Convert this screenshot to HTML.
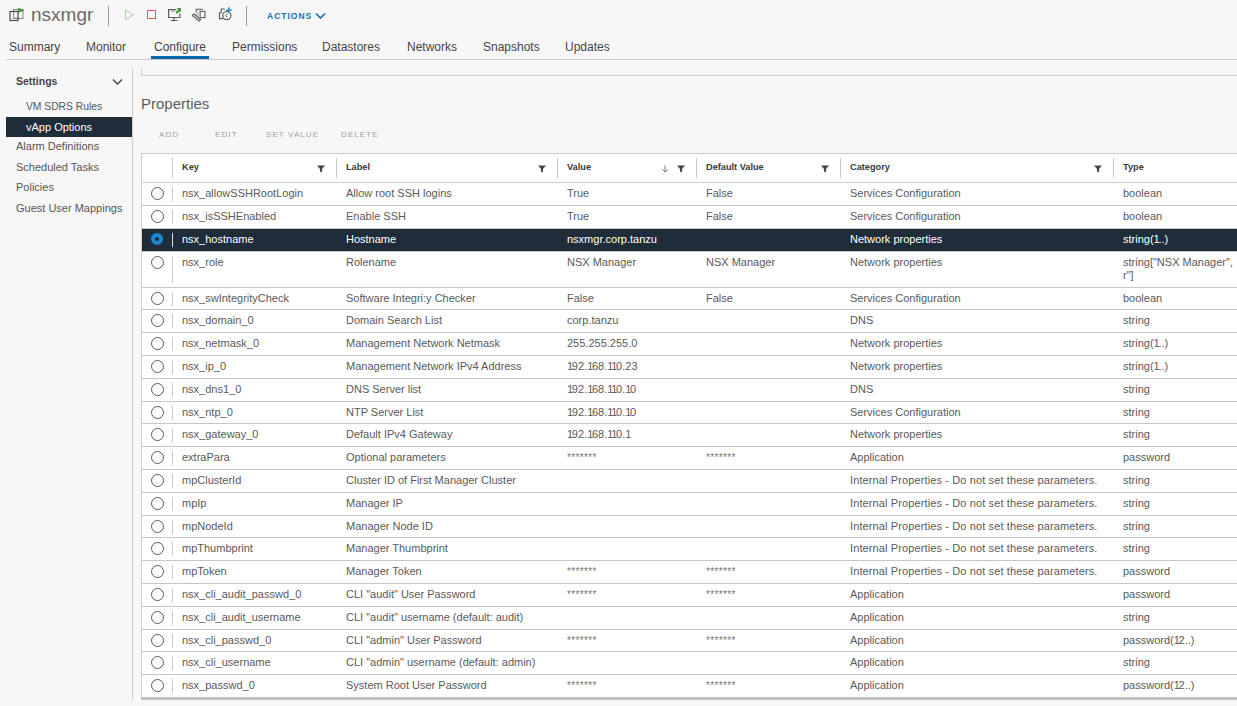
<!DOCTYPE html><html><head><meta charset="utf-8"><style>
*{margin:0;padding:0;box-sizing:border-box}
html,body{width:1237px;height:706px;overflow:hidden;background:#f7f7f7;font-family:"Liberation Sans",sans-serif;color:#565656}
.a{position:absolute;white-space:nowrap}
.t{font-size:11px;line-height:12.5px}
.hd{font-size:9.2px;font-weight:bold;color:#3a3a3a}
.tab{font-size:12px;color:#454545}
.side{font-size:10.5px;color:#565656}
.btn{font-size:8px;letter-spacing:1.1px;color:#a0a0a0}
.rad{position:absolute;width:13px;height:13px;border:1.3px solid #5a5a5a;border-radius:50%;background:#fff}
.sep{position:absolute;width:1px;background:#c8c8c8}
.hl{position:absolute;height:1px;background:#c6c6c6}
.pw{font-size:9px;letter-spacing:-0.6px}
</style></head><body>

<svg class="a" style="left:9px;top:7px" width="17" height="15" viewBox="0 0 17 15"><rect x="4.5" y="2.5" width="9.5" height="9" fill="none" stroke="#8a8a8a" stroke-width="1.1"/><rect x="1" y="4.5" width="8" height="9" fill="none" stroke="#4a4a4a" stroke-width="1.2"/><path d="M4.5 7V11H8" fill="none" stroke="#999" stroke-width="0.9"/><path d="M9 0.7L15.5 3.3L9 6Z" fill="#3c9a35"/></svg>
<div class="a" style="left:31px;top:4px;font-size:19px;color:#6a6a6a">nsxmgr</div>
<div class="a" style="left:108px;top:6px;width:1px;height:20px;background:#9a9a9a"></div>
<svg class="a" style="left:124px;top:8.5px" width="11" height="12"><path d="M1.4 1L9.5 5.8L1.4 10.6Z" fill="none" stroke="#a7d29b" stroke-width="1"/></svg>
<div class="a" style="left:146.6px;top:10px;width:9.6px;height:9px;border:1.2px solid #ec5a48"></div>
<svg class="a" style="left:167px;top:7px" width="16" height="16" viewBox="0 0 16 16"><path d="M9.5 2.6H1.6V10.5H12.9V6.5" fill="none" stroke="#5a5a5a" stroke-width="1.2"/><path d="M3.8 4.3H8" stroke="#9a9a9a" stroke-width="0.9"/><path d="M7 10.5V13M4 13.5H10.5" stroke="#5a5a5a" stroke-width="1.2"/><path d="M9.8 1H14V5.2Z" fill="#3a9a2c"/><path d="M9.3 6.3L12.5 2.8" stroke="#3a9a2c" stroke-width="2.2"/></svg>
<svg class="a" style="left:191px;top:7px" width="16" height="16" viewBox="0 0 16 16"><path d="M5.3 5.3V2.3H11.8" fill="none" stroke="#5a5a5a" stroke-width="1.1"/><rect x="9.1" y="4.3" width="4.8" height="6.3" fill="#f7f7f7" stroke="#5a5a5a" stroke-width="1.1"/><path d="M3.5 6.8L8 5.2L9.3 9.5L6.5 11Z" fill="#c8c8c8"/><path d="M1.3 8.4L2.9 6.9L9.6 12.6L8.1 14.1Z" fill="#e6e6e6" stroke="#555" stroke-width="1.1"/></svg>
<svg class="a" style="left:217px;top:6px" width="16" height="16" viewBox="0 0 16 16"><path d="M7.7 3H4.2V6.8H2.5V12.6H6" fill="none" stroke="#5a5a5a" stroke-width="1.1"/><circle cx="9.8" cy="9.6" r="4.1" fill="#f7f7f7" stroke="#5a5a5a" stroke-width="1.15"/><path d="M10.6 7.6L8.6 9.6L10.6 11.6" fill="none" stroke="#5a5a5a" stroke-width="1"/><path d="M11.9 1.3V7.1M9.1 4.2H14.7" stroke="#1b8bd6" stroke-width="1.5"/></svg>
<div class="a" style="left:246px;top:6px;width:1px;height:20px;background:#9a9a9a"></div>
<div class="a" style="left:267px;top:11px;font-size:8.5px;font-weight:bold;letter-spacing:1px;color:#1a73b8">ACTIONS</div>
<svg class="a" style="left:315px;top:12px" width="11" height="8"><path d="M1 1.5L5.5 6L10 1.5" fill="none" stroke="#1a73b8" stroke-width="1.7"/></svg>
<div class="a tab" style="left:9px;top:40px">Summary</div>
<div class="a tab" style="left:86px;top:40px">Monitor</div>
<div class="a tab" style="left:154px;top:40px">Configure</div>
<div class="a tab" style="left:232px;top:40px">Permissions</div>
<div class="a tab" style="left:322px;top:40px">Datastores</div>
<div class="a tab" style="left:407px;top:40px">Networks</div>
<div class="a tab" style="left:483px;top:40px">Snapshots</div>
<div class="a tab" style="left:565px;top:40px">Updates</div>
<div class="a" style="left:6px;top:59px;width:1231px;height:1px;background:#cccccc"></div>
<div class="a" style="left:151px;top:56px;width:58px;height:3px;background:#0065ab"></div>
<div class="a" style="left:132px;top:68px;width:1px;height:632px;background:#cccccc"></div>
<div class="a side" style="left:16px;top:75px;font-weight:bold;color:#444">Settings</div>
<svg class="a" style="left:112px;top:78px" width="11" height="8"><path d="M1 1.5L5.5 6L10 1.5" fill="none" stroke="#454545" stroke-width="1.3"/></svg>
<div class="a" style="left:6px;top:117px;width:126px;height:20px;background:#1f2d3a"></div>
<div class="a side" style="left:26px;top:100.5px;color:#565656;font-size:10.3px">VM SDRS Rules</div>
<div class="a side" style="left:26px;top:120.5px;color:#ffffff;font-size:11px">vApp Options</div>
<div class="a side" style="left:16px;top:140.0px;color:#565656;font-size:11px">Alarm Definitions</div>
<div class="a side" style="left:16px;top:160.5px;color:#565656;font-size:11px">Scheduled Tasks</div>
<div class="a side" style="left:16px;top:181.0px;color:#565656;font-size:11px">Policies</div>
<div class="a side" style="left:16px;top:202.0px;color:#565656;font-size:11px">Guest User Mappings</div>
<div class="a" style="left:141px;top:68px;width:1200px;height:8px;border-left:1px solid #cdcdcd;border-bottom:1px solid #cdcdcd"></div>
<div class="a" style="left:141px;top:95px;font-size:15px;color:#5e5e5e">Properties</div>
<div class="a btn" style="left:159px;top:130px">ADD</div>
<div class="a btn" style="left:215px;top:130px">EDIT</div>
<div class="a btn" style="left:266px;top:130px">SET VALUE</div>
<div class="a btn" style="left:341px;top:130px">DELETE</div>
<div class="a" style="left:141px;top:153px;width:1200px;height:547px;background:#fff;border:1px solid #cccccc;border-bottom:3px solid #c0c0c0"></div>
<div class="a hd" style="left:182px;top:162px">Key</div>
<div class="a hd" style="left:346px;top:162px">Label</div>
<div class="a hd" style="left:567px;top:162px">Value</div>
<div class="a hd" style="left:706px;top:162px">Default Value</div>
<div class="a hd" style="left:850px;top:162px">Category</div>
<div class="a hd" style="left:1123px;top:162px">Type</div>
<div class="sep" style="left:172px;top:158px;height:20px"></div>
<div class="sep" style="left:336px;top:158px;height:20px"></div>
<div class="sep" style="left:557px;top:158px;height:20px"></div>
<div class="sep" style="left:696px;top:158px;height:20px"></div>
<div class="sep" style="left:840px;top:158px;height:20px"></div>
<div class="sep" style="left:1113px;top:158px;height:20px"></div>
<div class="a" style="left:317px;top:165px;line-height:0"><svg style="display:block" width="8" height="8" viewBox="0 0 8 8"><path d="M0 0.5H8L5 4V7.5L3 6.5V4Z" fill="#454545"/></svg></div>
<div class="a" style="left:538px;top:165px;line-height:0"><svg style="display:block" width="8" height="8" viewBox="0 0 8 8"><path d="M0 0.5H8L5 4V7.5L3 6.5V4Z" fill="#454545"/></svg></div>
<div class="a" style="left:677px;top:165px;line-height:0"><svg style="display:block" width="8" height="8" viewBox="0 0 8 8"><path d="M0 0.5H8L5 4V7.5L3 6.5V4Z" fill="#454545"/></svg></div>
<div class="a" style="left:821px;top:165px;line-height:0"><svg style="display:block" width="8" height="8" viewBox="0 0 8 8"><path d="M0 0.5H8L5 4V7.5L3 6.5V4Z" fill="#454545"/></svg></div>
<div class="a" style="left:1094px;top:165px;line-height:0"><svg style="display:block" width="8" height="8" viewBox="0 0 8 8"><path d="M0 0.5H8L5 4V7.5L3 6.5V4Z" fill="#454545"/></svg></div>
<svg class="a" style="left:661px;top:164.5px" width="8" height="8"><path d="M4 0.5V7M1.3 4.3L4 7L6.7 4.3" fill="none" stroke="#6a6a6a" stroke-width="0.9"/></svg>
<div class="hl" style="left:142px;top:182px;width:1095px;background:#cccccc"></div>
<div class="rad" style="left:150.5px;top:187.3px"></div>
<div class="sep" style="left:172px;top:187.0px;height:14px;background:#c8c8c8"></div>
<div class="a t" style="left:182px;top:187.0px;color:#5a5a5a">nsx_allowSSHRootLogin</div>
<div class="a t" style="left:346px;top:187.0px;color:#5a5a5a">Allow root SSH logins</div>
<div class="a t" style="left:567px;top:187.0px;color:#5a5a5a">True</div>
<div class="a t" style="left:706px;top:187.0px;color:#5a5a5a">False</div>
<div class="a t" style="left:850px;top:187.0px;color:#5a5a5a">Services Configuration</div>
<div class="a t" style="left:1123px;top:187.0px;color:#5a5a5a">boolean</div>
<div class="hl" style="left:142px;top:205px;width:1095px"></div>
<div class="rad" style="left:150.5px;top:210.3px"></div>
<div class="sep" style="left:172px;top:210.0px;height:14px;background:#c8c8c8"></div>
<div class="a t" style="left:182px;top:210.0px;color:#5a5a5a">nsx_isSSHEnabled</div>
<div class="a t" style="left:346px;top:210.0px;color:#5a5a5a">Enable SSH</div>
<div class="a t" style="left:567px;top:210.0px;color:#5a5a5a">True</div>
<div class="a t" style="left:706px;top:210.0px;color:#5a5a5a">False</div>
<div class="a t" style="left:850px;top:210.0px;color:#5a5a5a">Services Configuration</div>
<div class="a t" style="left:1123px;top:210.0px;color:#5a5a5a">boolean</div>
<div class="hl" style="left:142px;top:228px;width:1095px"></div>
<div class="a" style="left:142px;top:229px;width:1095px;height:22px;background:#1f2d3a"></div>
<div class="rad" style="left:150.5px;top:232.9px;border:4.6px solid #1b87d4;background:#1f2d3a;width:12.6px;height:12.6px"></div>
<div class="sep" style="left:172px;top:233.0px;height:14px;background:#dddddd"></div>
<div class="a t" style="left:182px;top:233.0px;color:#ffffff">nsx_hostname</div>
<div class="a t" style="left:346px;top:233.0px;color:#ffffff">Hostname</div>
<div class="a t" style="left:567px;top:233.0px;color:#ffffff">nsxmgr.corp.tanzu</div>
<div class="a t" style="left:850px;top:233.0px;color:#ffffff">Network properties</div>
<div class="a t" style="left:1123px;top:233.0px;color:#ffffff">string(<span style="letter-spacing:-1.3px">1</span>..)</div>
<div class="hl" style="left:142px;top:251px;width:1095px"></div>
<div class="rad" style="left:150.5px;top:256.3px"></div>
<div class="sep" style="left:172px;top:256.0px;height:26.5px;background:#c8c8c8"></div>
<div class="a t" style="left:182px;top:256.0px;color:#5a5a5a">nsx_role</div>
<div class="a t" style="left:346px;top:256.0px;color:#5a5a5a">Rolename</div>
<div class="a t" style="left:567px;top:256.0px;color:#5a5a5a">NSX Manager</div>
<div class="a t" style="left:706px;top:256.0px;color:#5a5a5a">NSX Manager</div>
<div class="a t" style="left:850px;top:256.0px;color:#5a5a5a">Network properties</div>
<div class="a t" style="left:1123px;top:256.0px;color:#5a5a5a">string["NSX Manager",<br>r"]</div>
<div class="hl" style="left:142px;top:287px;width:1095px"></div>
<div class="rad" style="left:150.5px;top:292.3px"></div>
<div class="sep" style="left:172px;top:292.0px;height:14px;background:#c8c8c8"></div>
<div class="a t" style="left:182px;top:292.0px;color:#5a5a5a">nsx_swIntegrityCheck</div>
<div class="a t" style="left:346px;top:292.0px;color:#5a5a5a">Software Integri:y Checker</div>
<div class="a t" style="left:567px;top:292.0px;color:#5a5a5a">False</div>
<div class="a t" style="left:706px;top:292.0px;color:#5a5a5a">False</div>
<div class="a t" style="left:850px;top:292.0px;color:#5a5a5a">Services Configuration</div>
<div class="a t" style="left:1123px;top:292.0px;color:#5a5a5a">boolean</div>
<div class="hl" style="left:142px;top:309px;width:1095px"></div>
<div class="rad" style="left:150.5px;top:314.3px"></div>
<div class="sep" style="left:172px;top:314.0px;height:14px;background:#c8c8c8"></div>
<div class="a t" style="left:182px;top:314.0px;color:#5a5a5a">nsx_domain_0</div>
<div class="a t" style="left:346px;top:314.0px;color:#5a5a5a">Domain Search List</div>
<div class="a t" style="left:567px;top:314.0px;color:#5a5a5a">corp.tanzu</div>
<div class="a t" style="left:850px;top:314.0px;color:#5a5a5a">DNS</div>
<div class="a t" style="left:1123px;top:314.0px;color:#5a5a5a">string</div>
<div class="hl" style="left:142px;top:332px;width:1095px"></div>
<div class="rad" style="left:150.5px;top:337.3px"></div>
<div class="sep" style="left:172px;top:337.0px;height:14px;background:#c8c8c8"></div>
<div class="a t" style="left:182px;top:337.0px;color:#5a5a5a">nsx_netmask_0</div>
<div class="a t" style="left:346px;top:337.0px;color:#5a5a5a">Management Network Netmask</div>
<div class="a t" style="left:567px;top:337.0px;color:#5a5a5a">255.255.255.0</div>
<div class="a t" style="left:850px;top:337.0px;color:#5a5a5a">Network properties</div>
<div class="a t" style="left:1123px;top:337.0px;color:#5a5a5a">string(<span style="letter-spacing:-1.3px">1</span>..)</div>
<div class="hl" style="left:142px;top:355px;width:1095px"></div>
<div class="rad" style="left:150.5px;top:360.3px"></div>
<div class="sep" style="left:172px;top:360.0px;height:14px;background:#c8c8c8"></div>
<div class="a t" style="left:182px;top:360.0px;color:#5a5a5a">nsx_ip_0</div>
<div class="a t" style="left:346px;top:360.0px;color:#5a5a5a">Management Network IPv4 Address</div>
<div class="a t" style="left:567px;top:360.0px;color:#5a5a5a"><span style="letter-spacing:-1.3px">1</span>92.<span style="letter-spacing:-1.3px">1</span>68.<span style="letter-spacing:-1.3px">1</span><span style="letter-spacing:-1.3px">1</span>0.23</div>
<div class="a t" style="left:850px;top:360.0px;color:#5a5a5a">Network properties</div>
<div class="a t" style="left:1123px;top:360.0px;color:#5a5a5a">string(<span style="letter-spacing:-1.3px">1</span>..)</div>
<div class="hl" style="left:142px;top:378px;width:1095px"></div>
<div class="rad" style="left:150.5px;top:383.3px"></div>
<div class="sep" style="left:172px;top:383.0px;height:14px;background:#c8c8c8"></div>
<div class="a t" style="left:182px;top:383.0px;color:#5a5a5a">nsx_dns1_0</div>
<div class="a t" style="left:346px;top:383.0px;color:#5a5a5a">DNS Server list</div>
<div class="a t" style="left:567px;top:383.0px;color:#5a5a5a"><span style="letter-spacing:-1.3px">1</span>92.<span style="letter-spacing:-1.3px">1</span>68.<span style="letter-spacing:-1.3px">1</span><span style="letter-spacing:-1.3px">1</span>0.<span style="letter-spacing:-1.3px">1</span>0</div>
<div class="a t" style="left:850px;top:383.0px;color:#5a5a5a">DNS</div>
<div class="a t" style="left:1123px;top:383.0px;color:#5a5a5a">string</div>
<div class="hl" style="left:142px;top:401px;width:1095px"></div>
<div class="rad" style="left:150.5px;top:406.3px"></div>
<div class="sep" style="left:172px;top:406.0px;height:14px;background:#c8c8c8"></div>
<div class="a t" style="left:182px;top:406.0px;color:#5a5a5a">nsx_ntp_0</div>
<div class="a t" style="left:346px;top:406.0px;color:#5a5a5a">NTP Server List</div>
<div class="a t" style="left:567px;top:406.0px;color:#5a5a5a"><span style="letter-spacing:-1.3px">1</span>92.<span style="letter-spacing:-1.3px">1</span>68.<span style="letter-spacing:-1.3px">1</span><span style="letter-spacing:-1.3px">1</span>0.<span style="letter-spacing:-1.3px">1</span>0</div>
<div class="a t" style="left:850px;top:406.0px;color:#5a5a5a">Services Configuration</div>
<div class="a t" style="left:1123px;top:406.0px;color:#5a5a5a">string</div>
<div class="hl" style="left:142px;top:423px;width:1095px"></div>
<div class="rad" style="left:150.5px;top:428.3px"></div>
<div class="sep" style="left:172px;top:428.0px;height:14px;background:#c8c8c8"></div>
<div class="a t" style="left:182px;top:428.0px;color:#5a5a5a">nsx_gateway_0</div>
<div class="a t" style="left:346px;top:428.0px;color:#5a5a5a">Default IPv4 Gateway</div>
<div class="a t" style="left:567px;top:428.0px;color:#5a5a5a"><span style="letter-spacing:-1.3px">1</span>92.<span style="letter-spacing:-1.3px">1</span>68.<span style="letter-spacing:-1.3px">1</span><span style="letter-spacing:-1.3px">1</span>0.<span style="letter-spacing:-1.3px">1</span></div>
<div class="a t" style="left:850px;top:428.0px;color:#5a5a5a">Network properties</div>
<div class="a t" style="left:1123px;top:428.0px;color:#5a5a5a">string</div>
<div class="hl" style="left:142px;top:446px;width:1095px"></div>
<div class="rad" style="left:150.5px;top:451.3px"></div>
<div class="sep" style="left:172px;top:451.0px;height:14px;background:#c8c8c8"></div>
<div class="a t" style="left:182px;top:451.0px;color:#5a5a5a">extraPara</div>
<div class="a t" style="left:346px;top:451.0px;color:#5a5a5a">Optional parameters</div>
<div class="a t" style="left:567px;top:451.5px;color:#777;font-size:10px;letter-spacing:0.35px">*******</div>
<div class="a t" style="left:706px;top:451.5px;color:#777;font-size:10px;letter-spacing:0.35px">*******</div>
<div class="a t" style="left:850px;top:451.0px;color:#5a5a5a">Application</div>
<div class="a t" style="left:1123px;top:451.0px;color:#5a5a5a">password</div>
<div class="hl" style="left:142px;top:469px;width:1095px"></div>
<div class="rad" style="left:150.5px;top:474.3px"></div>
<div class="sep" style="left:172px;top:474.0px;height:14px;background:#c8c8c8"></div>
<div class="a t" style="left:182px;top:474.0px;color:#5a5a5a">mpClusterId</div>
<div class="a t" style="left:346px;top:474.0px;color:#5a5a5a">Cluster ID of First Manager Cluster</div>
<div class="a t" style="left:850px;top:474.0px;color:#5a5a5a;letter-spacing:0.12px">Internal Properties - Do not set these parameters.</div>
<div class="a t" style="left:1123px;top:474.0px;color:#5a5a5a">string</div>
<div class="hl" style="left:142px;top:492px;width:1095px"></div>
<div class="rad" style="left:150.5px;top:497.3px"></div>
<div class="sep" style="left:172px;top:497.0px;height:14px;background:#c8c8c8"></div>
<div class="a t" style="left:182px;top:497.0px;color:#5a5a5a">mpIp</div>
<div class="a t" style="left:346px;top:497.0px;color:#5a5a5a">Manager IP</div>
<div class="a t" style="left:850px;top:497.0px;color:#5a5a5a;letter-spacing:0.12px">Internal Properties - Do not set these parameters.</div>
<div class="a t" style="left:1123px;top:497.0px;color:#5a5a5a">string</div>
<div class="hl" style="left:142px;top:515px;width:1095px"></div>
<div class="rad" style="left:150.5px;top:520.3px"></div>
<div class="sep" style="left:172px;top:520.0px;height:14px;background:#c8c8c8"></div>
<div class="a t" style="left:182px;top:520.0px;color:#5a5a5a">mpNodeId</div>
<div class="a t" style="left:346px;top:520.0px;color:#5a5a5a">Manager Node ID</div>
<div class="a t" style="left:850px;top:520.0px;color:#5a5a5a;letter-spacing:0.12px">Internal Properties - Do not set these parameters.</div>
<div class="a t" style="left:1123px;top:520.0px;color:#5a5a5a">string</div>
<div class="hl" style="left:142px;top:537px;width:1095px"></div>
<div class="rad" style="left:150.5px;top:542.3px"></div>
<div class="sep" style="left:172px;top:542.0px;height:14px;background:#c8c8c8"></div>
<div class="a t" style="left:182px;top:542.0px;color:#5a5a5a">mpThumbprint</div>
<div class="a t" style="left:346px;top:542.0px;color:#5a5a5a">Manager Thumbprint</div>
<div class="a t" style="left:850px;top:542.0px;color:#5a5a5a;letter-spacing:0.12px">Internal Properties - Do not set these parameters.</div>
<div class="a t" style="left:1123px;top:542.0px;color:#5a5a5a">string</div>
<div class="hl" style="left:142px;top:560px;width:1095px"></div>
<div class="rad" style="left:150.5px;top:565.3px"></div>
<div class="sep" style="left:172px;top:565.0px;height:14px;background:#c8c8c8"></div>
<div class="a t" style="left:182px;top:565.0px;color:#5a5a5a">mpToken</div>
<div class="a t" style="left:346px;top:565.0px;color:#5a5a5a">Manager Token</div>
<div class="a t" style="left:567px;top:565.5px;color:#777;font-size:10px;letter-spacing:0.35px">*******</div>
<div class="a t" style="left:706px;top:565.5px;color:#777;font-size:10px;letter-spacing:0.35px">*******</div>
<div class="a t" style="left:850px;top:565.0px;color:#5a5a5a;letter-spacing:0.12px">Internal Properties - Do not set these parameters.</div>
<div class="a t" style="left:1123px;top:565.0px;color:#5a5a5a">password</div>
<div class="hl" style="left:142px;top:583px;width:1095px"></div>
<div class="rad" style="left:150.5px;top:588.3px"></div>
<div class="sep" style="left:172px;top:588.0px;height:14px;background:#c8c8c8"></div>
<div class="a t" style="left:182px;top:588.0px;color:#5a5a5a">nsx_cli_audit_passwd_0</div>
<div class="a t" style="left:346px;top:588.0px;color:#5a5a5a">CLI "audit" User Password</div>
<div class="a t" style="left:567px;top:588.5px;color:#777;font-size:10px;letter-spacing:0.35px">*******</div>
<div class="a t" style="left:706px;top:588.5px;color:#777;font-size:10px;letter-spacing:0.35px">*******</div>
<div class="a t" style="left:850px;top:588.0px;color:#5a5a5a">Application</div>
<div class="a t" style="left:1123px;top:588.0px;color:#5a5a5a">password</div>
<div class="hl" style="left:142px;top:606px;width:1095px"></div>
<div class="rad" style="left:150.5px;top:611.3px"></div>
<div class="sep" style="left:172px;top:611.0px;height:14px;background:#c8c8c8"></div>
<div class="a t" style="left:182px;top:611.0px;color:#5a5a5a">nsx_cli_audit_username</div>
<div class="a t" style="left:346px;top:611.0px;color:#5a5a5a">CLI "audit" username (default: audit)</div>
<div class="a t" style="left:850px;top:611.0px;color:#5a5a5a">Application</div>
<div class="a t" style="left:1123px;top:611.0px;color:#5a5a5a">string</div>
<div class="hl" style="left:142px;top:629px;width:1095px"></div>
<div class="rad" style="left:150.5px;top:634.3px"></div>
<div class="sep" style="left:172px;top:634.0px;height:14px;background:#c8c8c8"></div>
<div class="a t" style="left:182px;top:634.0px;color:#5a5a5a">nsx_cli_passwd_0</div>
<div class="a t" style="left:346px;top:634.0px;color:#5a5a5a">CLI "admin" User Password</div>
<div class="a t" style="left:567px;top:634.5px;color:#777;font-size:10px;letter-spacing:0.35px">*******</div>
<div class="a t" style="left:706px;top:634.5px;color:#777;font-size:10px;letter-spacing:0.35px">*******</div>
<div class="a t" style="left:850px;top:634.0px;color:#5a5a5a">Application</div>
<div class="a t" style="left:1123px;top:634.0px;color:#5a5a5a">password(<span style="letter-spacing:-1.3px">1</span>2..)</div>
<div class="hl" style="left:142px;top:651px;width:1095px"></div>
<div class="rad" style="left:150.5px;top:656.3px"></div>
<div class="sep" style="left:172px;top:656.0px;height:14px;background:#c8c8c8"></div>
<div class="a t" style="left:182px;top:656.0px;color:#5a5a5a">nsx_cli_username</div>
<div class="a t" style="left:346px;top:656.0px;color:#5a5a5a">CLI "admin" username (default: admin)</div>
<div class="a t" style="left:850px;top:656.0px;color:#5a5a5a">Application</div>
<div class="a t" style="left:1123px;top:656.0px;color:#5a5a5a">string</div>
<div class="hl" style="left:142px;top:674px;width:1095px"></div>
<div class="rad" style="left:150.5px;top:679.3px"></div>
<div class="sep" style="left:172px;top:679.0px;height:14px;background:#c8c8c8"></div>
<div class="a t" style="left:182px;top:679.0px;color:#5a5a5a">nsx_passwd_0</div>
<div class="a t" style="left:346px;top:679.0px;color:#5a5a5a">System Root User Password</div>
<div class="a t" style="left:567px;top:679.5px;color:#777;font-size:10px;letter-spacing:0.35px">*******</div>
<div class="a t" style="left:706px;top:679.5px;color:#777;font-size:10px;letter-spacing:0.35px">*******</div>
<div class="a t" style="left:850px;top:679.0px;color:#5a5a5a">Application</div>
<div class="a t" style="left:1123px;top:679.0px;color:#5a5a5a">password(<span style="letter-spacing:-1.3px">1</span>2..)</div>
</body></html>
